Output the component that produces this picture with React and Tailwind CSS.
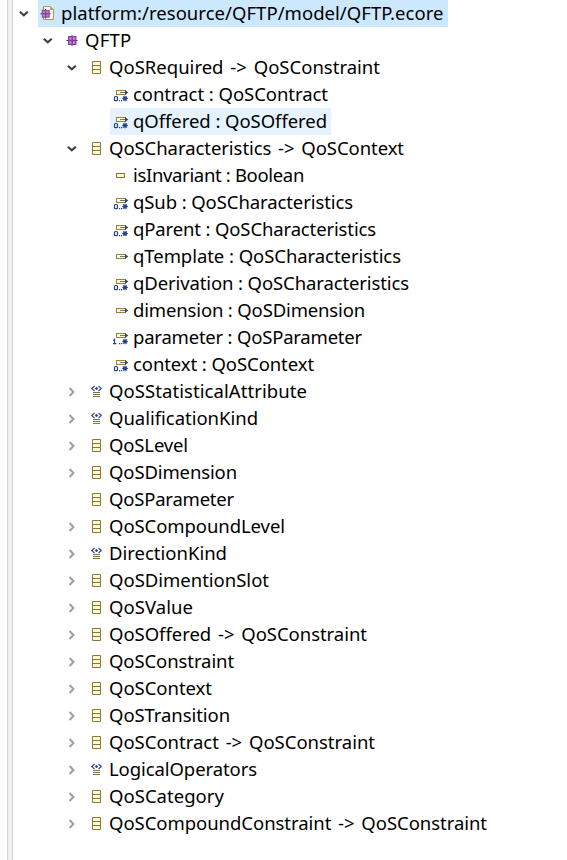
import { useLayoutEffect, useRef, useState } from "react";

// [depth, icon, label, chevron state, label width, highlight]
const rows = [
  [0, "file", "platform:/resource/QFTP/model/QFTP.ecore", "open", 382.5, "bg-[#cce8ff]"],
  [1, "package", "QFTP", "open", 46.5],
  [2, "class", "QoSRequired -> QoSConstraint", "open", 271],
  [3, "many", "contract : QoSContract", "", 195],
  [3, "many", "qOffered : QoSOffered", "", 194, "bg-[#e5f3ff]"],
  [2, "class", "QoSCharacteristics -> QoSContext", "open", 295],
  [3, "attribute", "isInvariant : Boolean", "", 171],
  [3, "many", "qSub : QoSCharacteristics", "", 220],
  [3, "many", "qParent : QoSCharacteristics", "", 243],
  [3, "reference", "qTemplate : QoSCharacteristics", "", 268],
  [3, "many", "qDerivation : QoSCharacteristics", "", 276],
  [3, "reference", "dimension : QoSDimension", "", 232],
  [3, "some", "parameter : QoSParameter", "", 229],
  [3, "many", "context : QoSContext", "", 181],
  [2, "enum", "QoSStatisticalAttribute", "closed", 198],
  [2, "enum", "QualificationKind", "closed", 149],
  [2, "class", "QoSLevel", "closed", 79],
  [2, "class", "QoSDimension", "closed", 128],
  [2, "class", "QoSParameter", "", 125],
  [2, "class", "QoSCompoundLevel", "closed", 176],
  [2, "enum", "DirectionKind", "closed", 118],
  [2, "class", "QoSDimentionSlot", "closed", 160],
  [2, "class", "QoSValue", "closed", 84],
  [2, "class", "QoSOffered -> QoSConstraint", "closed", 258],
  [2, "class", "QoSConstraint", "closed", 125],
  [2, "class", "QoSContext", "closed", 103],
  [2, "class", "QoSTransition", "closed", 121],
  [2, "class", "QoSContract -> QoSConstraint", "closed", 266],
  [2, "enum", "LogicalOperators", "closed", 148],
  [2, "class", "QoSCategory", "closed", 115],
  [2, "class", "QoSCompoundConstraint -> QoSConstraint", "closed", 378],
];

const indents = ["pl-0", "pl-6", "pl-12", "pl-[72px]"];

function Chevron({ state }) {
  return (
    <svg className="h-[27px] w-[25px] shrink-0" viewBox="0 0 25 27" fill="none">
      {state === "open" && <path d="M6.8 11.7 10.8 15.3 14.8 11.7" stroke="#404040" strokeWidth="2.1" />}
      {state === "closed" && <path d="M8.6 10 12.4 14 8.6 18" stroke="#a0a0a0" strokeWidth="2.1" />}
    </svg>
  );
}

function Package() {
  return (
    <g>
      <path d="M10 8v11M4.5 13.5h11" stroke="#3f1f52" />
      <rect x="6.5" y="9.5" width="7.5" height="8" fill="#a45bb8" stroke="#8a45a0" />
      <path d="M7.5 10.5h2v2h-2zM11 10.5h2v2h-2zM7.5 14.5h2v2h-2zM11 14.5h2v2h-2z" fill="#c48ad0" />
      <path d="M10.2 10v7M7 13.5h6.5" stroke="#7d3c92" />
    </g>
  );
}

function Arrow() {
  return (
    <g>
      <rect x="6.5" y="11.5" width="9" height="4" fill="#fffbd0" stroke="#96803c" />
      <path d="M10 13.5h6" stroke="#56808c" />
      <path d="M15 11v5l3.4-2.5z" fill="#454954" />
    </g>
  );
}

function Icon({ kind }) {
  return (
    <svg className="h-[27px] w-[23px] shrink-0 overflow-visible" viewBox="0 0 23 27" fill="none">
      {kind === "file" && (
        <g>
          <path d="M5.5 6.5h7l3 3v10h-10z" fill="#fffdf0" stroke="#b2934e" />
          <path d="M12 6v4h4z" fill="#c9a558" />
          <g transform="translate(-1.7 2) scale(.92 .87)">
            <Package />
          </g>
        </g>
      )}
      {kind === "package" && <Package />}
      {kind === "class" && (
        <g>
          <path d="M6.5 7.5h8v12h-8z" fill="#fffbd0" stroke="#907638" />
          <path d="M7 11.5h7M7 15.5h7" stroke="#83794b" />
        </g>
      )}
      {kind === "attribute" && (
        <rect x="6.5" y="11.5" width="8" height="4" fill="#fffbd0" stroke="#8a7334" />
      )}
      {kind === "reference" && <Arrow />}
      {(kind === "many" || kind === "some") && (
        <g>
          <g transform="translate(0 -2)">
            <Arrow />
          </g>
          {kind === "many" ? (
            <rect x="4.5" y="15.5" width="3" height="4.2" rx="1" stroke="#1f438c" strokeWidth="1.2" />
          ) : (
            <path d="M3.2 16.5 4.5 15.5V20M3 19.6h3.4" stroke="#1f438c" strokeWidth="1.2" />
          )}
          <path d="M9 19h1.2v1.2H9zM11 19h1.2v1.2H11z" fill="#1f438c" />
          <path
            d="M12.3 17.5h5.6M15 14.8v5.4M13 15.5l4 4M17 15.5l-4 4"
            stroke="#1f438c"
            strokeWidth="1.1"
          />
        </g>
      )}
      {kind === "enum" && (
        <g>
          <path d="M8.5 8 5.7 10.5 8.5 13M12.5 8l2.8 2.5-2.8 2.5" stroke="#344b91" strokeWidth="1.2" />
          <path d="M10.5 8.7l1.8 1.8-1.8 1.8-1.8-1.8z" fill="#344b91" />
          <path d="M7 14.5h7M7 16.5h7M7 18.5h7" stroke="#887746" />
        </g>
      )}
    </svg>
  );
}

function Label({ text, width }) {
  const ref = useRef(null);
  const [spacing, setSpacing] = useState(0);
  useLayoutEffect(() => {
    const natural = ref.current.getBoundingClientRect().width;
    setSpacing((width - natural) / text.length);
  }, [text, width]);
  return (
    <span
      ref={ref}
      className={`-mt-[2px] whitespace-pre ${text.includes("->") ? "[word-spacing:2px]" : ""}`}
      style={{ letterSpacing: `${spacing}px` }}
    >
      {text}
    </span>
  );
}

export default function App() {
  return (
    <div className="flex h-[860px] w-[567px] overflow-hidden bg-white font-['Noto_Sans','Open_Sans',sans-serif] text-[18.5px] leading-[27px] text-black">
      <div className="ml-[7px] w-[6px] shrink-0 border-x border-[#d5d5d5] bg-[#f0f0f0]" />
      <div className="flex flex-col">
        {rows.map(([depth, icon, text, state, width, highlight]) => (
          <div key={text} className={`flex h-[27px] shrink-0 items-center ${indents[depth]}`}>
            <Chevron state={state} />
            <div className={`flex h-[27px] items-center pr-1 ${highlight || ""}`}>
              <Icon kind={icon} />
              <Label text={text} width={width} />
            </div>
          </div>
        ))}
      </div>
    </div>
  );
}
